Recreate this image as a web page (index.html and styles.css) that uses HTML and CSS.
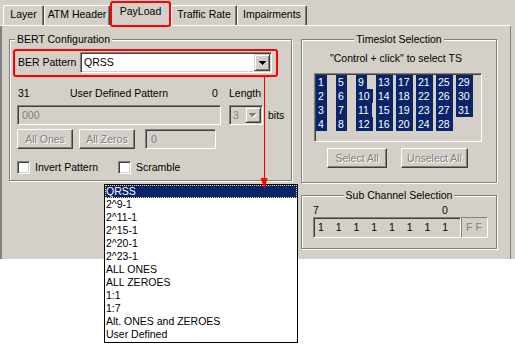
FILE: index.html
```html
<!DOCTYPE html>
<html>
<head>
<meta charset="utf-8">
<link rel="stylesheet" href="styles.css">
</head>
<body>
<div class="window">
  <div class="tabstrip">
    <div class="tab t-layer">Layer</div>
    <div class="tab t-atm">ATM Header</div>
    <div class="tab t-payload active">PayLoad</div>
    <div class="tab t-traffic">Traffic Rate</div>
    <div class="tab t-imp">Impairments</div>
  </div>
  <div class="panel">
    <div class="gb bert">
      <div class="gb-title">BERT Configuration</div>
      <div class="row r-pattern">
        <span class="lbl-ber">BER Pattern</span>
        <div class="combo c-ber"><span class="combo-val">QRSS</span><span class="dd-btn"><svg width="7" height="4" viewBox="0 0 7 4"><path d="M0 0h7v1h-1v1h-1v1h-1v1h-1v-1h-1v-1h-1v-1h-1z" fill="#000"/></svg></span></div>
      </div>
      <div class="row r-labels">
        <span class="l31">31</span><span class="ludp">User Defined Pattern</span><span class="l0">0</span><span class="llen">Length</span>
      </div>
      <div class="row r-fields">
        <div class="edit dis e-pattern">000</div>
        <div class="combo dis c-len"><span class="combo-val">3</span><span class="dd-btn"><svg width="8" height="5" viewBox="0 0 8 5"><path d="M1 1h7v1h-1v1h-1v1h-1v1h-1v-1h-1v-1h-1v-1h-1z" fill="#fff"/><path d="M0 0h7v1h-1v1h-1v1h-1v1h-1v-1h-1v-1h-1v-1h-1z" fill="#808080"/></svg></span></div>
        <span class="bits">bits</span>
      </div>
      <div class="row r-buttons">
        <div class="btn dis b-ones">All Ones</div>
        <div class="btn dis b-zeros">All Zeros</div>
        <div class="edit dis e-zero">0</div>
      </div>
      <div class="row r-checks">
        <span class="chk"></span><span class="chk-lbl l-inv">Invert Pattern</span>
        <span class="chk"></span><span class="chk-lbl">Scramble</span>
      </div>
    </div>
    <div class="rightcol">
      <div class="gb tsbox">
        <div class="gb-title center">Timeslot Selection</div>
        <div class="ts-hint">"Control + click" to select TS</div>
        <div class="ts-list">
          <span class="slot">1</span><span class="slot">2</span><span class="slot">3</span><span class="slot">4</span>
          <span class="slot">5</span><span class="slot">6</span><span class="slot">7</span><span class="slot">8</span>
          <span class="slot">9</span><span class="slot">10</span><span class="slot">11</span><span class="slot">12</span>
          <span class="slot">13</span><span class="slot">14</span><span class="slot">15</span><span class="slot">16</span>
          <span class="slot">17</span><span class="slot">18</span><span class="slot">19</span><span class="slot">20</span>
          <span class="slot">21</span><span class="slot">22</span><span class="slot">23</span><span class="slot">24</span>
          <span class="slot">25</span><span class="slot">26</span><span class="slot">27</span><span class="slot">28</span>
          <span class="slot">29</span><span class="slot">30</span><span class="slot">31</span>
        </div>
        <div class="ts-buttons">
          <div class="btn dis b-sel">Select All</div>
          <div class="btn dis b-unsel">Unselect All</div>
        </div>
      </div>
      <div class="gb sub">
        <div class="gb-title center">Sub Channel Selection</div>
        <div class="sub-labels"><span class="s7">7</span><span>0</span></div>
        <div class="sub-row">
          <div class="bitsbox"><span>1</span><span>1</span><span>1</span><span>1</span><span>1</span><span>1</span><span>1</span><span>1</span></div>
          <div class="ffbox">FF</div>
        </div>
      </div>
    </div>
  </div>
</div>

<div class="droplist">
  <div class="opt sel">QRSS</div>
  <div class="opt">2^9-1</div>
  <div class="opt">2^11-1</div>
  <div class="opt">2^15-1</div>
  <div class="opt">2^20-1</div>
  <div class="opt">2^23-1</div>
  <div class="opt">ALL ONES</div>
  <div class="opt">ALL ZEROES</div>
  <div class="opt">1:1</div>
  <div class="opt">1:7</div>
  <div class="opt">Alt. ONES and ZEROES</div>
  <div class="opt">User Defined</div>
</div>

<div class="hl hl-tab"></div>
<div class="hl hl-ber"></div>
<svg class="arrow" width="12" height="116" viewBox="0 0 12 116">
  <rect x="6" y="1" width="1" height="104" fill="#f00"/>
  <polygon points="2.5,102 9.5,102 6.5,113" fill="#f00"/>
</svg>
</body>
</html>
```

FILE: styles.css
```css
* { box-sizing: border-box; }

body {
  margin: 0;
  width: 515px;
  height: 344px;
  overflow: hidden;
  position: relative;
  background: #fff;
  font-family: "Liberation Sans", Arial, sans-serif;
  font-size: 10.5px;
  line-height: 13px;
  color: #000;
}

.window {
  background: #d4d0c8;
  height: 259px;
}

/* Tabs */
.tabstrip {
  height: 25px;
  display: flex;
  align-items: flex-end;
  padding-left: 3px;
  position: relative;
  z-index: 1;
}

.tab {
  height: 20px;
  padding-top: 2px;
  border-left: 1px solid #fff;
  border-top: 1px solid #fff;
  border-right: 1px solid #404040;
  box-shadow: inset -1px 0 0 #808080;
  border-radius: 2px 2px 0 0;
  text-align: center;
  white-space: nowrap;
}

.t-layer { width: 41px; }
.t-atm { width: 66px; }
.t-payload { width: 61px; }
.t-traffic { width: 66px; }
.t-imp { width: 70px; }

.tab.active {
  height: 24px;
  margin-bottom: -1px;
  background: #d4d0c8;
}

/* Panel */
.panel {
  height: 234px;
  width: 511px;
  display: flex;
  align-items: flex-start;
  padding: 14px 0 0 9px;
  box-shadow: inset 0 1px 0 #fff, inset 2px 0 0 #808080, inset -1px 0 0 #808080;
}

/* Group boxes */
.gb {
  border: 1px solid #808080;
  box-shadow: inset 1px 1px 0 #fff, 1px 1px 0 #fff;
  display: flex;
  flex-direction: column;
}

.gb-title {
  align-self: flex-start;
  margin: -7px 0 0 5px;
  padding: 0 2px;
  background: #d4d0c8;
  height: 13px;
  white-space: nowrap;
}

.gb-title.center {
  align-self: center;
  margin-left: 0;
}

.bert {
  width: 283px;
  height: 142px;
}

.row {
  display: flex;
  align-items: center;
}

.r-pattern {
  margin-top: 6px;
  height: 21px;
  padding-left: 8px;
}

.lbl-ber { width: 62px; }

.combo {
  display: flex;
  align-items: center;
  height: 21px;
  background: #fff;
  border: 1px solid;
  border-color: #808080 #fff #fff #808080;
  box-shadow: inset 1px 1px 0 #404040, inset -1px -1px 0 #d4d0c8;
  padding: 2px 2px 2px 3px;
}

.c-ber { width: 192px; }

.combo-val { flex: 1; }

.dd-btn {
  width: 16px;
  height: 17px;
  background: #d4d0c8;
  border: 1px solid;
  border-color: #d4d0c8 #404040 #404040 #d4d0c8;
  box-shadow: inset 1px 1px 0 #fff, inset -1px -1px 0 #808080;
  display: flex;
  align-items: center;
  justify-content: center;
  margin-right: -1px;
}

.dd-btn svg { display: block; }

.r-labels {
  margin-top: 14px;
  height: 13px;
  padding-left: 8px;
}

.l31 { width: 52px; }
.ludp { width: 142px; }
.l0 { width: 17px; }

.r-fields {
  margin-top: 5px;
  height: 20px;
  padding-left: 7px;
}

.edit {
  height: 20px;
  border: 1px solid;
  border-color: #808080 #fff #fff #808080;
  box-shadow: inset 1px 1px 0 #404040, inset -1px -1px 0 #d4d0c8;
  padding: 3px 4px;
  background: #fff;
}

.edit.dis {
  background: #d4d0c8;
  color: #808080;
}

.e-pattern { width: 204px; }

.c-len {
  width: 34px;
  height: 20px;
  margin-left: 8px;
  background: #d4d0c8;
  color: #808080;
}

.c-len .dd-btn { height: 16px; }

.bits { margin-left: 5px; }

.r-buttons {
  margin-top: 4px;
  height: 20px;
  padding-left: 7px;
}

.btn {
  height: 20px;
  border: 1px solid;
  border-color: #fff #404040 #404040 #fff;
  box-shadow: inset -1px -1px 0 #808080;
  display: flex;
  align-items: center;
  justify-content: center;
  white-space: nowrap;
  background: #d4d0c8;
}

.btn.dis {
  color: #808080;
  text-shadow: 1px 1px 0 #fff;
}

.b-ones { width: 56px; }
.b-zeros { width: 56px; margin-left: 6px; }
.e-zero { width: 71px; margin-left: 10px; padding-left: 5px; }

.r-checks {
  margin-top: 12px;
  height: 13px;
  padding-left: 7px;
}

.chk {
  width: 13px;
  height: 13px;
  background: #fff;
  border: 1px solid;
  border-color: #808080 #fff #fff #808080;
  box-shadow: inset 1px 1px 0 #404040, inset -1px -1px 0 #d4d0c8;
}

.chk-lbl { margin-left: 5px; }
.l-inv { width: 83px; }

/* Right column */
.rightcol {
  margin-left: 9px;
  display: flex;
  flex-direction: column;
}

.tsbox {
  width: 196px;
  height: 144px;
}

.ts-hint {
  margin-top: 6px;
  text-align: center;
  padding-right: 6px;
}

.ts-list {
  margin: 8px 0 0 12px;
  width: 168px;
  height: 69px;
  border: 1px solid;
  border-color: #808080 #fff #fff #808080;
  box-shadow: inset 1px 1px 0 #404040, inset -1px -1px 0 #d4d0c8;
  padding: 1px 0 0 1px;
  display: grid;
  grid-auto-flow: column;
  grid-template-rows: repeat(4, 14px);
  grid-auto-columns: 20px;
  align-content: start;
  justify-content: start;
}

.slot {
  justify-self: start;
  height: 14px;
  line-height: 14px;
  padding: 0 3px 0 2px;
  background: #0a246a;
  color: #fff;
  white-space: nowrap;
}

.ts-buttons {
  display: flex;
  margin-top: 6px;
  padding-left: 25px;
}

.b-sel { width: 60px; }
.b-unsel { width: 67px; margin-left: 14px; }

.sub {
  margin-top: 12px;
  width: 196px;
  height: 54px;
}

.sub-labels {
  display: flex;
  margin-top: 2px;
  padding-left: 11px;
  height: 13px;
}

.s7 { width: 129px; }

.sub-row {
  display: flex;
  padding-left: 11px;
}

.bitsbox {
  width: 148px;
  height: 21px;
  border: 1px solid;
  border-color: #808080 #fff #fff #808080;
  box-shadow: inset 1px 1px 0 #404040;
  display: flex;
  padding: 3px 0 0 4px;
}

.bitsbox span { width: 18px; }

.ffbox {
  width: 27px;
  height: 21px;
  border: 1px solid;
  border-color: #808080 #fff #fff #808080;
  color: #808080;
  letter-spacing: 3px;
  padding: 3px 0 0 4px;
}

/* Dropdown list (overlay) */
.droplist {
  position: absolute;
  left: 104px;
  top: 184px;
  width: 194px;
  height: 159px;
  border: 1px solid #000;
  background: #fff;
  z-index: 5;
}

.opt {
  height: 13px;
  line-height: 13px;
  padding-left: 1px;
  white-space: nowrap;
}

.opt.sel {
  background: #0a246a;
  color: #fff;
  outline: 1px dotted #f5db95;
  outline-offset: -1px;
}

/* Annotations */
.hl {
  position: absolute;
  border: 2px solid #f00;
  border-radius: 3px;
  z-index: 6;
}

.hl-tab {
  left: 110px;
  top: 1px;
  width: 61px;
  height: 26px;
}

.hl-ber {
  left: 13px;
  top: 49px;
  width: 265px;
  height: 28px;
}

.arrow {
  position: absolute;
  left: 258px;
  top: 76px;
  z-index: 7;
}
```
